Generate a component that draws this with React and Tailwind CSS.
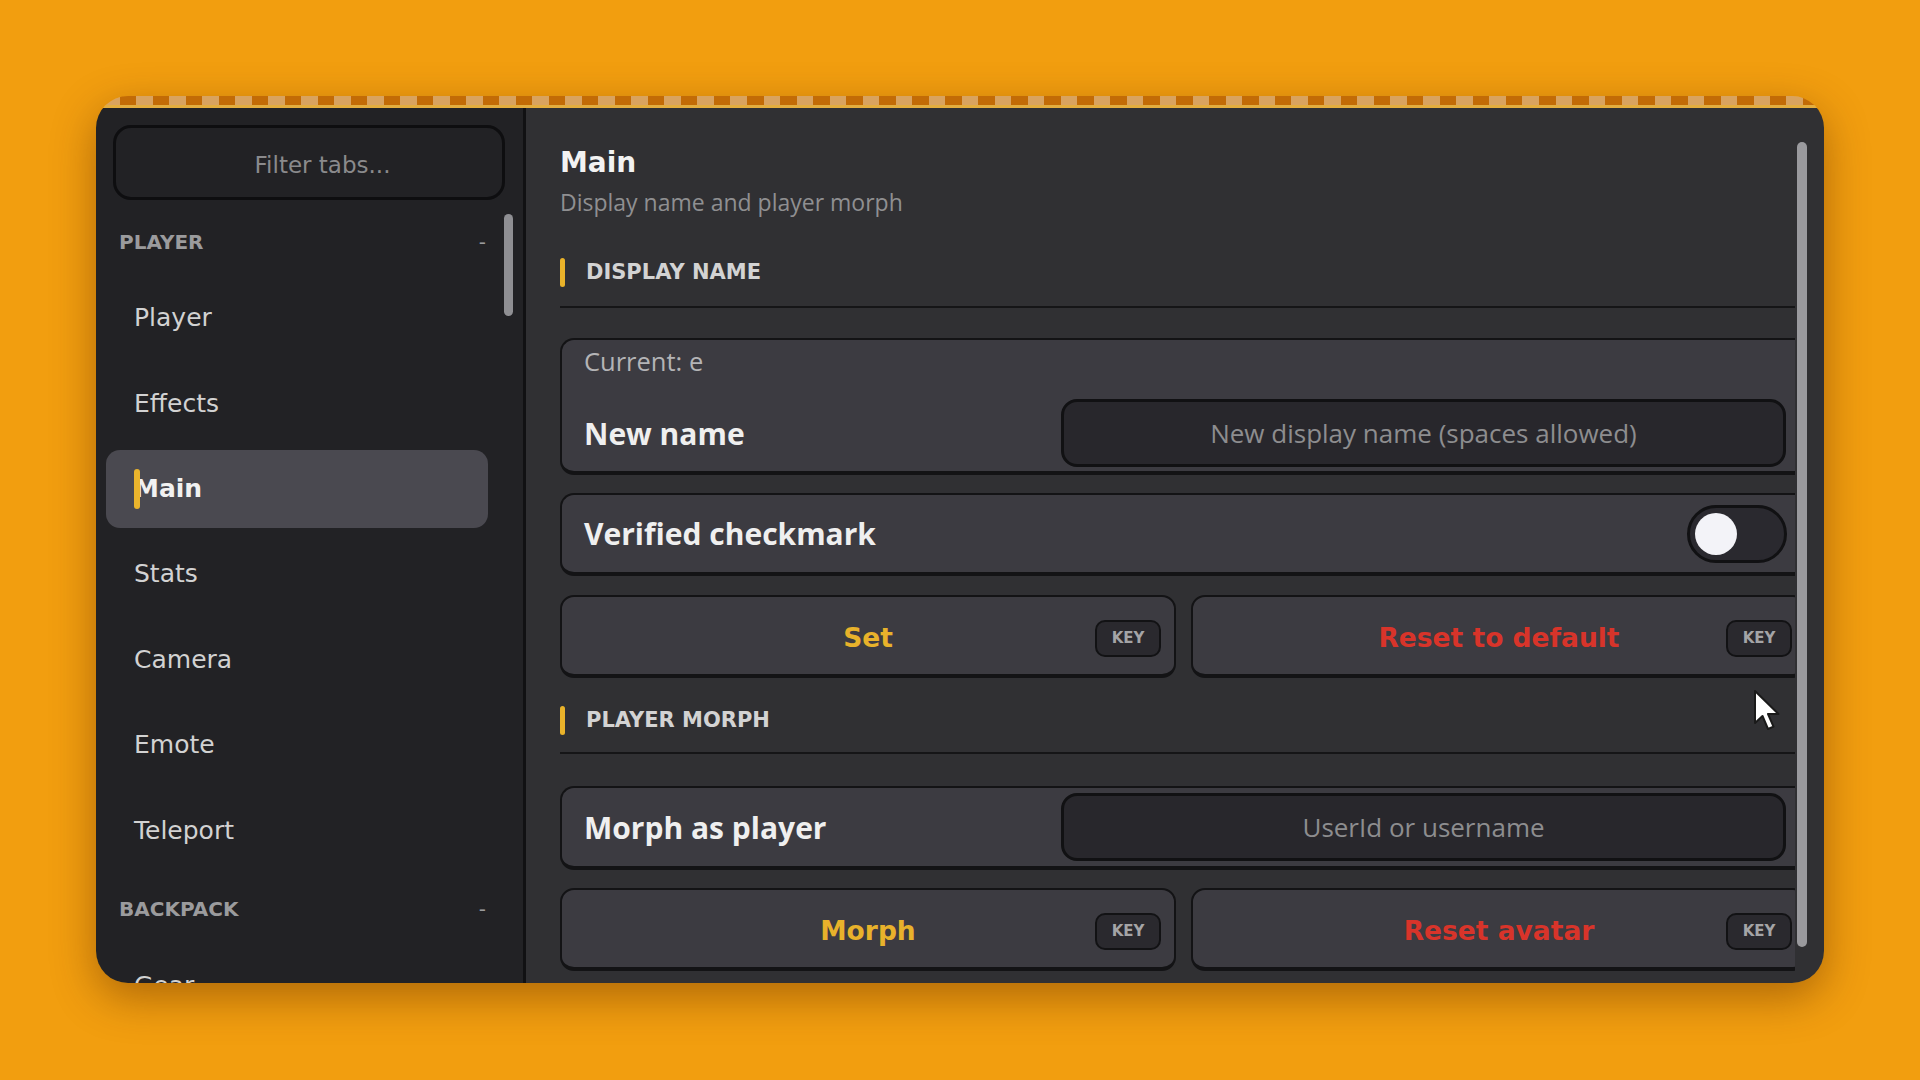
import React from "react";

const DV = "font-['DejaVu_Sans',sans-serif]";
const OS = "font-['Open_Sans',sans-serif]";

const tabs = ["Player", "Effects", "Main", "Stats", "Camera", "Emote", "Teleport"];

function GroupHeader({ label }) {
  return (
    <div className={`ml-[23px] flex h-[30px] w-[369px] items-center justify-between text-[20px] font-bold text-[#9b9b9d] ${DV}`}>
      <span>{label}</span>
      <span className="pr-[2px] font-normal">-</span>
    </div>
  );
}

function NavItem({ label, active }) {
  return (
    <div
      className={`relative flex h-[78px] w-[382px] shrink-0 items-center rounded-[14px] pl-[28px] text-[25px] ${DV} ${
        active ? "bg-[#4a4950] font-bold text-[#f1f1f1]" : "text-[#d2d2d2]"
      }`}
    >
      {active && <span className="absolute left-[28px] top-[19px] h-[40px] w-[6px] rounded-full bg-[#eab42c]" />}
      {label}
    </div>
  );
}

function SectionHeader({ label }) {
  return (
    <div className="flex h-[29px] items-center">
      <span className="h-[29px] w-[5px] rounded-full bg-[#e9b22a]" />
      <span className={`ml-[21px] text-[21px] font-bold text-[#d3d3d3] ${DV}`}>{label}</span>
    </div>
  );
}

function TextField({ placeholder }) {
  return (
    <div
      className={`flex h-[68px] w-[725px] items-center justify-center rounded-[16px] border-[3px] border-[#111113] bg-[#28272c] text-[26px] text-[#8d8d8f] ${OS}`}
    >
      {placeholder}
    </div>
  );
}

function KeyBadge() {
  return (
    <span
      className={`absolute right-[13px] top-[23px] flex h-[37px] w-[66px] items-center justify-center rounded-[10px] border-2 border-[#121214] bg-[#2a292e] text-[15px] font-bold text-[#a4a4a6] ${DV}`}
    >
      KEY
    </span>
  );
}

function ActionButton({ label, danger }) {
  return (
    <div className="relative flex h-[83px] items-center justify-center rounded-[14px] border-2 border-b-[4px] border-[#131315] bg-[#3c3b41] pt-[4px]">
      <span className={`text-[26.5px] font-bold ${DV} ${danger ? "text-[#d8342a]" : "text-[#e8b22b]"}`}>{label}</span>
      <KeyBadge />
    </div>
  );
}

function Toggle() {
  return (
    <div className="flex h-[58px] w-[100px] items-center rounded-full border-[3px] border-[#111113] bg-[#2a292f] pl-[5px]">
      <div className="h-[42px] w-[42px] rounded-full bg-[#f3f3f8]" />
    </div>
  );
}

function Cursor() {
  return (
    <svg className="absolute left-[1657px] top-[593px]" width="28" height="43" viewBox="0 0 28 43">
      <path
        d="M2 2 L2 34 L9.5 27 L15 40 L20.5 37.6 L15 25 L25.5 25 Z"
        fill="#ffffff"
        stroke="#1a1a1a"
        strokeWidth="2"
        strokeLinejoin="round"
      />
    </svg>
  );
}

export default function App() {
  return (
    <div className="h-[1080px] w-[1920px] overflow-hidden bg-[#f29e0f] pl-[96px] pt-[96px]">
      <div className="relative flex h-[887px] w-[1728px] flex-col overflow-hidden rounded-[32px] shadow-[0_14px_44px_rgba(90,40,0,0.45)]">
        {/* clipped title strip */}
        <div className="h-[9px] shrink-0 bg-[repeating-linear-gradient(90deg,#c26b06_0px_7.5px,#d9a35f_7.5px_24px,#c26b06_24px_33px)]" />
        <div className="h-[3px] shrink-0 bg-[#e3ad3e]" />

        <div className="flex min-h-0 flex-1">
          {/* sidebar */}
          <aside className="relative w-[430px] shrink-0 overflow-hidden border-r-[3px] border-[#111113] bg-[#222225]">
            <div
              className={`ml-[17px] mt-[17px] flex h-[75px] w-[392px] items-center justify-center rounded-[18px] border-[3px] border-[#0e0e10] bg-[#222225] pl-[27px] pt-[5px] text-[23px] text-[#8a8a8c] ${DV}`}
            >
              Filter tabs...
            </div>
            <div className="mt-[27px]">
              <GroupHeader label="PLAYER" />
            </div>
            <div className="ml-[10px] mt-[22px] flex flex-col gap-[7.4px]">
              {tabs.map((t) => (
                <NavItem key={t} label={t} active={t === "Main"} />
              ))}
            </div>
            <div className="mt-[25px]">
              <GroupHeader label="BACKPACK" />
            </div>
            <div className="ml-[10px] mt-[22px] flex flex-col gap-[7.4px]">
              <NavItem label="Gear" />
            </div>
            <div className="absolute left-[408px] top-[106px] h-[102px] w-[9px] rounded-full bg-[#8f8f93]" />
          </aside>

          {/* content */}
          <main className="relative min-w-0 flex-1 bg-[#303033] pl-[34px] pt-[38px]">
            <div className="w-[1235px] overflow-hidden">
              <div className="w-[1247px]">
                <h1 className={`text-[28px] font-bold leading-[34px] text-[#f2f2f2] ${DV}`}>Main</h1>
                <p className={`mt-[9px] text-[23px] leading-[26px] text-[#8f8f91] ${OS}`}>Display name and player morph</p>

                <div className="mt-[43px]">
                  <SectionHeader label="DISPLAY NAME" />
                </div>
                <div className="mt-[19px] h-[2px] bg-[#151517]" />

                <div className="mt-[30px] h-[137px] rounded-l-[14px] border-2 border-b-[4px] border-r-0 border-[#131315] bg-[#3c3b41] pl-[22px] pr-[21px] pt-[8px]">
                  <div className={`text-[25.5px] leading-[26px] text-[#b4b4b6] ${OS}`}>Current: e</div>
                  <div className="mt-[25px] flex items-center justify-between">
                    <span className={`text-[30px] font-bold text-[#efefef] ${OS}`}>New name</span>
                    <TextField placeholder="New display name (spaces allowed)" />
                  </div>
                </div>

                <div className="mt-[18px] flex h-[83px] items-center justify-between rounded-l-[14px] border-2 border-b-[4px] border-r-0 border-[#131315] bg-[#3c3b41] pl-[22px] pr-[20px]">
                  <span className={`text-[30px] font-bold text-[#efefef] ${OS}`}>Verified checkmark</span>
                  <Toggle />
                </div>

                <div className="mt-[19px] grid grid-cols-2 gap-[15px]">
                  <ActionButton label="Set" />
                  <ActionButton label="Reset to default" danger />
                </div>

                <div className="mt-[28px]">
                  <SectionHeader label="PLAYER MORPH" />
                </div>
                <div className="mt-[17px] h-[2px] bg-[#151517]" />

                <div className="mt-[32px] flex h-[84px] items-center justify-between rounded-l-[14px] border-2 border-b-[4px] border-r-0 border-[#131315] bg-[#3c3b41] pl-[22px] pr-[21px]">
                  <span className={`text-[30px] font-bold text-[#efefef] ${OS}`}>Morph as player</span>
                  <TextField placeholder="UserId or username" />
                </div>

                <div className="mt-[18px] grid grid-cols-2 gap-[15px]">
                  <ActionButton label="Morph" />
                  <ActionButton label="Reset avatar" danger />
                </div>
              </div>
            </div>
            <div className="absolute left-[1271px] top-[34px] h-[805px] w-[10px] rounded-full bg-[#9a9a9e]" />
          </main>
        </div>

        <Cursor />
      </div>
    </div>
  );
}
